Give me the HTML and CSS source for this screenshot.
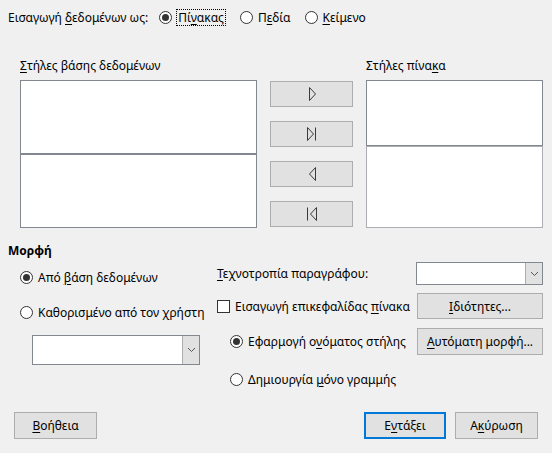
FILE: index.html
```html
<!DOCTYPE html>
<html lang="el">
<head>
<meta charset="utf-8">
<title>Εισαγωγή δεδομένων</title>
<link rel="stylesheet" href="styles.css">
</head>
<body>
<div class="dlg">
  <div class="top">
    <span class="lbl">Εισαγωγή <u>δ</u>εδομένων ως:</span>
    <label class="radio on first"><span class="rb"></span><span class="focus">Πί<u>ν</u>ακας</span></label>
    <label class="radio"><span class="rb"></span><span>Π<u>ε</u>δία</span></label>
    <label class="radio"><span class="rb"></span><span><u>Κ</u>είμενο</span></label>
  </div>

  <div class="cols">
    <div class="col-left">
      <div class="cap"><u>Σ</u>τήλες βάσης δεδομένων</div>
      <div class="lb lb-a"></div>
      <div class="lb lb-b"></div>
    </div>
    <div class="col-btns">
      <button class="btn arrow"><svg width="16" height="16" viewBox="0 0 16 16"><polygon points="5.5,1.5 11.5,8 5.5,14.5" fill="none" stroke="#3a3a3a"/></svg></button>
      <button class="btn arrow"><svg width="16" height="16" viewBox="0 0 16 16"><polygon points="3.5,1.5 9.5,8 3.5,14.5" fill="none" stroke="#3a3a3a"/><line x1="11.5" y1="1.5" x2="11.5" y2="14.5" stroke="#3a3a3a"/></svg></button>
      <button class="btn arrow"><svg width="16" height="16" viewBox="0 0 16 16"><polygon points="11.5,1.5 5.5,8 11.5,14.5" fill="none" stroke="#3a3a3a"/></svg></button>
      <button class="btn arrow"><svg width="16" height="16" viewBox="0 0 16 16"><line x1="3.5" y1="1.5" x2="3.5" y2="14.5" stroke="#3a3a3a"/><polygon points="12.5,1.5 6.5,8 12.5,14.5" fill="none" stroke="#3a3a3a"/></svg></button>
    </div>
    <div class="col-right">
      <div class="cap">Στήλες πίνα<u>κ</u>α</div>
      <div class="lb lb-c"></div>
      <div class="lb lb-d"></div>
    </div>
  </div>

  <div class="fmt">
    <div class="hdr">Μορφή</div>
    <div class="fmt-body">
      <div class="fmt-left">
        <label class="radio on lrow"><span class="rb"></span><span>Από <u>β</u>άση δεδομένων</span></label>
        <label class="radio lrow lrow2"><span class="rb"></span><span>Καθορισμένο από τον <u>χ</u>ρήστη</span></label>
        <div class="combo combo-l"><span class="field"></span><span class="drop"><svg width="9" height="6" viewBox="0 0 9 6"><path d="M1 1 L4.5 4.5 L8 1" fill="none" stroke="#555"/></svg></span></div>
      </div>
      <div class="fmt-right">
        <div class="frow r1">
          <span><u>Τ</u>εχνοτροπία παραγράφου:</span>
          <div class="combo combo-r"><span class="field"></span><span class="drop"><svg width="9" height="6" viewBox="0 0 9 6"><path d="M1 1 L4.5 4.5 L8 1" fill="none" stroke="#555"/></svg></span></div>
        </div>
        <div class="frow r2">
          <label class="check"><span class="cb"></span><span>Εισαγωγή επικεφαλίδας <u>π</u>ίνακα</span></label>
          <button class="btn wide"><u>Ι</u>διότητες...</button>
        </div>
        <div class="frow r3">
          <label class="radio on sub"><span class="rb"></span><span>Εφαρμογή ο<u>ν</u>όματος στήλης</span></label>
          <button class="btn wide tall"><u>Α</u>υτόματη μορφή...</button>
        </div>
        <div class="frow r4">
          <label class="radio sub"><span class="rb"></span><span>Δημιουργία <u>μ</u>όνο γραμμής</span></label>
        </div>
      </div>
    </div>
  </div>

  <div class="foot">
    <button class="btn dbtn"><u>Β</u>οήθεια</button>
    <button class="btn dbtn ok">Ε<u>ν</u>τάξει</button>
    <button class="btn dbtn cancel">Α<u>κ</u>ύρωση</button>
  </div>
</div>
</body>
</html>
```
FILE: styles.css
```css
* { box-sizing: border-box; }
html, body { margin: 0; padding: 0; }
body {
  background: #f0f0f0;
  font-family: "Noto Sans", "DejaVu Sans", sans-serif;
  font-size: 12px;
  color: #000;
  width: 552px;
  height: 453px;
  overflow: hidden;
}
u { text-decoration: underline; text-underline-offset: 2px; }
.dlg { width: 552px; }

/* top row */
.top {
  display: flex;
  align-items: center;
  height: 18px;
  margin-top: 8px;
  padding-left: 8px;
}
.radio {
  display: inline-flex;
  align-items: center;
  gap: 5px;
  white-space: nowrap;
}
.top .radio { margin-left: 14px; }
.top .radio.first { margin-left: 11px; }
.rb {
  width: 13px;
  height: 13px;
  border: 1px solid #333;
  border-radius: 50%;
  background: #fff;
  position: relative;
  flex: none;
}
.on .rb::after {
  content: "";
  position: absolute;
  left: 2px;
  top: 2px;
  width: 7px;
  height: 7px;
  border-radius: 50%;
  background: #333;
}
.focus {
  border: 1px dotted #000;
  padding: 0 1px;
  line-height: 15px;
  margin-left: -1px;
}

/* columns */
.cols {
  display: flex;
  align-items: flex-start;
  margin-top: 32px;
  padding-left: 20px;
}
.cap {
  height: 16px;
  line-height: 16px;
  margin-bottom: 6px;
  white-space: nowrap;
}
.col-left { width: 237px; }
.lb { background: #fff; border: 1px solid #828790; }
.lb-a { height: 74px; }
.lb-b { height: 74px; }
.col-btns {
  margin-left: 13px;
  padding-top: 23px;
  display: flex;
  flex-direction: column;
  gap: 14px;
}
.col-right { margin-left: 13px; width: 177px; }
.lb-c { height: 66px; }
.lb-d { height: 82px; border-color: #abadb3; }

.btn {
  font: inherit;
  color: #000;
  background: #e1e1e1;
  border: 1px solid #adadad;
  border-radius: 0;
  padding: 0;
  margin: 0;
  display: flex;
  align-items: center;
  justify-content: center;
}
.arrow { width: 83px; height: 26px; }

/* format section */
.fmt { margin-top: 15px; }
.hdr {
  padding-left: 8px;
  font-weight: bold;
  line-height: 16px;
  height: 16px;
}
.fmt-body { display: flex; margin-top: 3px; }
.fmt-left {
  width: 217px;
  padding-left: 20px;
  padding-top: 5px;
}
.lrow { display: flex; height: 20px; }
.lrow2 { margin-top: 15px; }
.combo {
  display: flex;
  background: #fff;
  border: 1px solid #828790;
}
.combo .field { flex: 1; }
.combo .drop {
  width: 17px;
  background: #e1e1e1;
  border-left: 1px solid #adadad;
  display: flex;
  align-items: center;
  justify-content: center;
}
.combo-l { margin-top: 13px; margin-left: 12px; width: 168px; height: 30px; }
.combo-r { width: 127px; height: 23px; }

.fmt-right { width: 326px; display: flex; flex-direction: column; }
.frow {
  display: flex;
  align-items: center;
  justify-content: space-between;
  white-space: nowrap;
}
.r1 { height: 23px; }
.r2 { height: 26px; margin-top: 8px; }
.r3 { height: 27px; margin-top: 9px; }
.r4 { height: 24px; margin-top: 12px; }
.check { display: inline-flex; align-items: center; gap: 5px; }
.cb {
  width: 13px;
  height: 13px;
  border: 1px solid #333;
  background: #fff;
  flex: none;
}
.sub { padding-left: 13px; }
.wide { width: 126px; height: 26px; }
.wide.tall { height: 27px; }

/* footer */
.foot {
  display: flex;
  margin-top: 21px;
  padding: 0 14px;
}
.dbtn { width: 83px; height: 27px; }
.ok { margin-left: auto; width: 82px; border: 2px solid #0078d7; }
.cancel { margin-left: 9px; }
```
